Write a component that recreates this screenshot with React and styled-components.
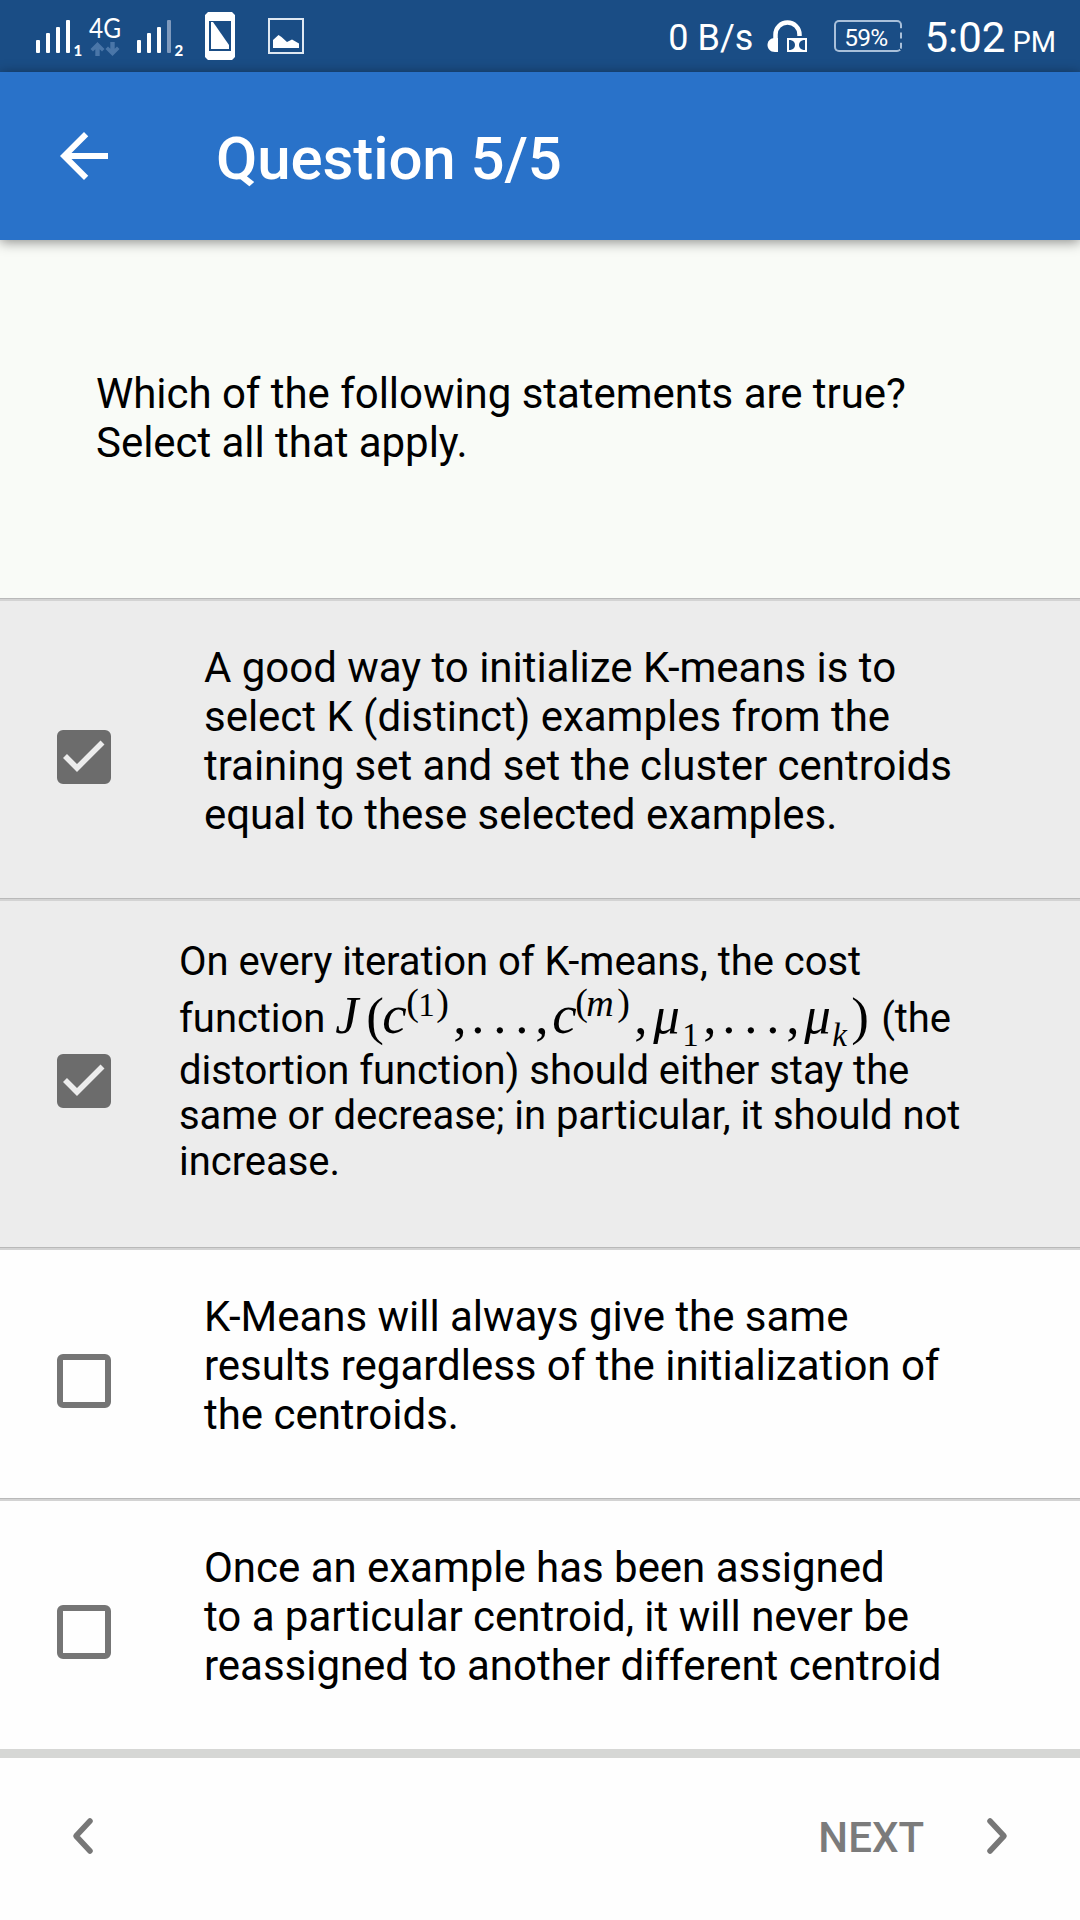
import React from "react";
import styled, { createGlobalStyle } from "styled-components";

const GlobalStyle = createGlobalStyle`
  * { box-sizing: border-box; }
  body { margin: 0; background: #fefefe; font-family: Roboto, sans-serif; }
`;

const Screen = styled.main`
  display: flex;
  flex-direction: column;
  width: 1080px;
  height: 1920px;
  overflow: hidden;
`;

const StatusBar = styled.div`
  display: flex;
  justify-content: space-between;
  height: 72px;
  background: #1a4d85;
  color: #fff;
`;

const StatusLeft = styled.svg`
  display: block;
  width: 320px;
  height: 72px;
`;

const StatusRight = styled.div`
  display: flex;
  align-items: flex-start;
  padding-right: 24px;
`;

const StatusText = styled.span`
  font-size: ${(p) => p.$size}px;
  line-height: 40px;
  margin-top: ${(p) => p.$top}px;
  margin-right: ${(p) => p.$gap || 0}px;
  white-space: nowrap;
`;

const HeadphoneIcon = styled.svg`
  display: block;
  width: 42px;
  height: 36px;
  margin: 18px 25px 0 0;
`;

const Battery = styled.div`
  display: flex;
  align-items: center;
  justify-content: center;
  width: 68px;
  height: 32px;
  margin: 20px 22px 0 0;
  padding: 2px 5px 0 0;
  border: 2px solid #a9c0da;
  border-right-style: dashed;
  border-radius: 5px;
  font-size: 24.5px;
  letter-spacing: -0.8px;
`;

const AppBar = styled.header`
  display: flex;
  align-items: center;
  height: 168px;
  flex: none;
  padding-left: 48px;
  gap: 96px;
  background: #2972c9;
  color: #fff;
  box-shadow: 0 2px 12px rgba(0, 0, 0, 0.45);
  z-index: 1;
`;

const BackIcon = styled.svg`
  width: 72px;
  height: 72px;
  fill: #fff;
`;

const Title = styled.h1`
  margin: 6px 0 0;
  font-size: 60px;
  font-weight: 500;
  line-height: 70px;
  letter-spacing: -0.1px;
`;

const Question = styled.section`
  height: 358px;
  flex: none;
  padding: 129px 96px 0;
  background: #f9fbf7;
  color: #000;
  font-size: 42px;
  line-height: 49px;
  letter-spacing: -0.04px;
  white-space: pre-line;
`;

const Option = styled.label`
  display: flex;
  flex: none;
  height: ${(p) => p.$height}px;
  padding-left: 57px;
  border-top: 1px solid #b9b9b9;
  box-shadow: inset 0 2px 0 #d3d3d3;
  background: ${(p) => (p.$checked ? "#ececec" : "#fefefe")};
`;

const CheckSlot = styled.span`
  display: flex;
  align-items: center;
  width: ${(p) => p.$width}px;
  padding-top: 16px;
`;

const Box = styled.span`
  display: flex;
  align-items: center;
  justify-content: center;
  width: 54px;
  height: 54px;
  border: 6px solid ${(p) => (p.$checked ? "#6c6c6c" : "#757575")};
  border-radius: 6px;
  background: ${(p) => (p.$checked ? "#6c6c6c" : "transparent")};
`;

const Tick = styled.svg`
  flex: none;
  width: 54px;
  height: 54px;
`;

const OptionText = styled.span`
  padding-top: 44px;
  color: #000;
  font-size: 42px;
  line-height: 49px;
  letter-spacing: -0.025px;
  white-space: pre-line;
`;

const FormulaText = styled.span`
  display: flex;
  flex-direction: column;
  padding-top: 37px;
  color: #000;
  font-size: 40px;
  letter-spacing: -0.04px;
`;

const Line = styled.span`
  height: ${(p) => p.$height}px;
  line-height: ${(p) => p.$height}px;
  white-space: pre;
`;

const Atom = styled.span`
  display: inline-block;
  width: ${(p) => p.$w}px;
  font-family: "Liberation Serif", serif;
  font-size: ${(p) => p.$size || 53}px;
  font-style: ${(p) => (p.$italic ? "italic" : "normal")};
  line-height: 0;
  vertical-align: ${(p) => p.$raise || -1}px;
`;

const Footer = styled.footer`
  display: flex;
  align-items: center;
  justify-content: space-between;
  height: 171px;
  flex: none;
  padding: 0 72px 7px;
  border-top: 9px solid #d6d7d5;
  background: #fefefe;
  color: #7b7b7b;
`;

const NextButton = styled.div`
  display: flex;
  align-items: center;
  gap: 62px;
`;

const NextLabel = styled.span`
  padding-top: 3px;
  font-size: 42px;
  font-weight: 500;
  line-height: 49px;
`;

const ChevronIcon = styled.svg`
  display: block;
  width: 22px;
  height: 38px;
  fill: none;
  stroke: #777;
  stroke-width: 5.5;
  stroke-linecap: round;
  stroke-linejoin: round;
`;

const formula = [
  { t: "J", w: 31, italic: true, size: 52 },
  { t: "(", w: 16, size: 53, raise: -2 },
  { t: "c", w: 24, italic: true, size: 55 },
  { t: "(", w: 12, size: 38, raise: 17 },
  { t: "1", w: 18, size: 33, raise: 16 },
  { t: ")", w: 17, size: 38, raise: 17 },
  { t: ",", w: 18 },
  { t: ".", w: 22 },
  { t: ".", w: 22 },
  { t: ".", w: 20 },
  { t: ",", w: 17 },
  { t: "c", w: 23, italic: true, size: 55 },
  { t: "(", w: 11, size: 38, raise: 17 },
  { t: "m", w: 31, size: 38, raise: 16, italic: true },
  { t: ")", w: 17, size: 38, raise: 17 },
  { t: ",", w: 19 },
  { t: "μ", w: 29, italic: true },
  { t: "1", w: 21, size: 33, raise: -14 },
  { t: ",", w: 19 },
  { t: ".", w: 22 },
  { t: ".", w: 22 },
  { t: ".", w: 20 },
  { t: ",", w: 18 },
  { t: "μ", w: 28, italic: true },
  { t: "k", w: 19, size: 33, raise: -14, italic: true },
  { t: ")", w: 20, size: 53, raise: -2 },
];

function StatusIcons() {
  return (
    <StatusLeft viewBox="0 0 320 72" fill="#fff">
      <rect x="36" y="40" width="4" height="13" rx="1" />
      <rect x="46" y="33" width="4" height="20" rx="1" />
      <rect x="56" y="27" width="4" height="26" rx="1" />
      <rect x="66" y="20" width="4" height="33" rx="1" />
      <text x="73.500" y="56" fontFamily="Lato" fontWeight="900" fontSize="15">1</text>
      <text x="89" y="38" fontFamily="Lato" fontSize="27" textLength="32" lengthAdjust="spacingAndGlyphs">4G</text>
      <g fill="#4a76a8">
        <path d="M97.500 42l7 7-2.500 2.500-2.300-2.300v6.800h-4.400v-6.800l-2.300 2.300-2.500-2.500z" />
        <path d="M112.500 56l7-7-2.500-2.500-2.300 2.300v-6.800h-4.400v6.800l-2.300-2.300-2.500 2.500z" />
      </g>
      <rect x="137" y="40" width="4" height="13" rx="1" />
      <rect x="147" y="33" width="4" height="20" rx="1" />
      <rect x="157" y="27" width="4" height="26" rx="1" />
      <rect x="167" y="20" width="4" height="33" rx="1" fill="#7f9abd" />
      <text x="174.500" y="56" fontFamily="Lato" fontWeight="900" fontSize="15">2</text>
      <path fillRule="evenodd" d="M208 12h24l3 3v42l-3 3h-24l-3-3v-42zM209 21v30h22v-30z" />
      <path d="M211 22h2l16 23v4h-18z" />
      <path fillRule="evenodd" d="M268 18h36v36h-36zM270 20v32h32v-32z" fill="#dfe8f2" />
      <path d="M273 48v-8l5.500-5 3 2 5.500 5 5-2.500 7 4v4.500z" />
    </StatusLeft>
  );
}

function Chevron({ next }) {
  return (
    <ChevronIcon viewBox="0 0 22 38">
      <path d={next ? "M4 4l14 15-14 15" : "M18 4l-14 15 14 15"} />
    </ChevronIcon>
  );
}

function Check({ checked, width }) {
  return (
    <CheckSlot $width={width}>
      <Box $checked={checked}>
        {checked && (
          <Tick viewBox="0 0 54 54" fill="none" stroke="#ececec" strokeWidth="5.600">
            <path d="M8 26l12 12 25.500-25.500" />
          </Tick>
        )}
      </Box>
    </CheckSlot>
  );
}

function Choice({ checked, height, children }) {
  return (
    <Option $checked={checked} $height={height}>
      <Check checked={checked} width={147} />
      <OptionText>{children}</OptionText>
    </Option>
  );
}

export default function App() {
  return (
    <Screen>
      <GlobalStyle />
      <StatusBar>
        <StatusIcons />
        <StatusRight>
          <StatusText $size={36} $top={18} $gap={14}>0 B/s</StatusText>
          <HeadphoneIcon viewBox="0 0 42 36">
            <path d="M8.500 26V16.500a12 12 0 0 1 24 0V18" fill="none" stroke="#fff" strokeWidth="4.500" />
            <path d="M11 20v14h-3c-10 0-10-14 0-14z" fill="#fff" />
            <path fill="#fff" d="M20 20h20v14h-20z" />
            <path fill="#1a4d85" d="M22 22h1.500q4.500 1 4.500 5t-4.500 5h-1.500zM38 22h-1.500q-4.500 1-4.500 5t4.500 5h1.500z" />
          </HeadphoneIcon>
          <Battery>59%</Battery>
          <StatusText $size={42} $top={18} $gap={7}>5:02</StatusText>
          <StatusText $size={29} $top={22}>PM</StatusText>
        </StatusRight>
      </StatusBar>
      <AppBar>
        <BackIcon viewBox="0 0 24 24">
          <path d="M20 11H7.830l5.590-5.590L12 4l-8 8 8 8 1.410-1.410L7.830 13H20v-2z" />
        </BackIcon>
        <Title>Question 5/5</Title>
      </AppBar>
      <Question>{"Which of the following statements are true?\nSelect all that apply."}</Question>
      <Choice checked height={300}>
        {"A good way to initialize K-means is to\nselect K (distinct) examples from the\ntraining set and set the cluster centroids\nequal to these selected examples."}
      </Choice>
      <Option $checked $height={349}>
        <Check checked width={122} />
        <FormulaText>
          <Line $height={52}>On every iteration of K-means, the cost</Line>
          <Line $height={62}>
            {"function "}
            {formula.map((a, i) => (
              <Atom key={i} $w={a.w} $size={a.size} $raise={a.raise} $italic={a.italic}>{a.t}</Atom>
            ))}
            {" (the"}
          </Line>
          <Line $height={42}>distortion function) should either stay the</Line>
          <Line $height={47}>same or decrease; in particular, it should not</Line>
          <Line $height={45}>increase.</Line>
        </FormulaText>
      </Option>
      <Choice height={251}>
        {"K-Means will always give the same\nresults regardless of the initialization of\nthe centroids."}
      </Choice>
      <Choice height={251}>
        {"Once an example has been assigned\nto a particular centroid, it will never be\nreassigned to another different centroid"}
      </Choice>
      <Footer>
        <Chevron />
        <NextButton>
          <NextLabel>NEXT</NextLabel>
          <Chevron next />
        </NextButton>
      </Footer>
    </Screen>
  );
}
